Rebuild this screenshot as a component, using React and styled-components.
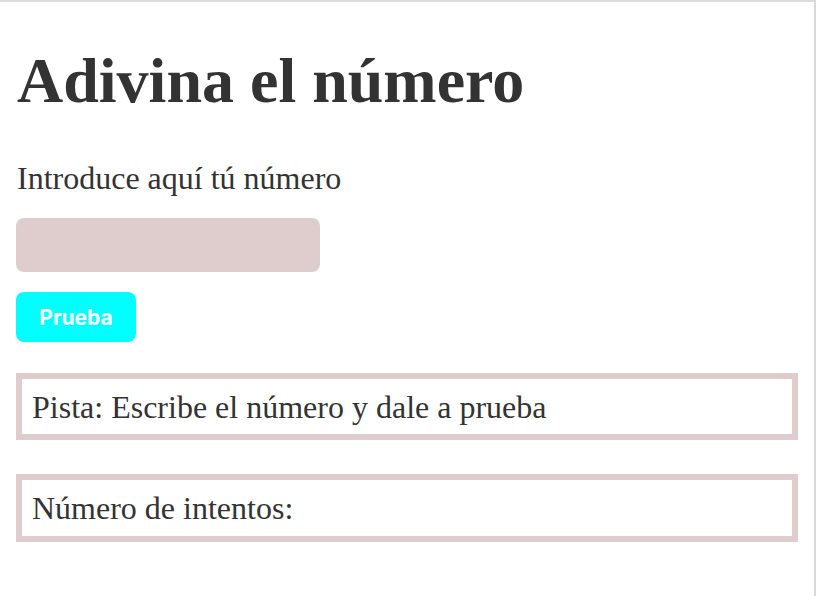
import React from 'react'
import styled, { createGlobalStyle } from 'styled-components';

const GlobalStyle = createGlobalStyle`
    html, body {
        margin:0;
        padding:0;
        background:#fff;
    }
`;

const Frame = styled.div`
    box-sizing:border-box;
    height:100vh;
    border-top:2px solid #dcdce0;
    border-right:2px solid #d9d9dd;
    padding:0 16px;
    font-family:"Liberation Serif", "Times New Roman", serif;
    color:#333;
`;

const Title = styled.h1`
    font-size:64px;
    font-weight:bold;
    margin:42px 0 42px 1px;
    line-height:74px;
`;

const Label = styled.p`
    font-size:32px;
    margin:0 0 21px 1px;
    line-height:37px;
`;

const Input = styled.input`
    display:block;
    box-sizing:border-box;
    width:304px;
    height:54px;
    border:none;
    border-radius:8px;
    background:#dfcccc;
    margin:0 0 20px;
    outline:none;
    font-size:24px;
`;

const Button = styled.button`
    display:block;
    box-sizing:border-box;
    width:120px;
    height:50px;
    padding:0;
    border:none;
    border-radius:8px;
    background:#00ffff;
    color:#fff;
    font-family:Inter, "Liberation Sans", sans-serif;
    font-weight:700;
    font-size:21px;
    cursor:pointer;
`;

const Panels = styled.div`
    display:flex;
    flex-direction:column;
    gap:34px;
    margin-top:31px;
`;

const Panel = styled.div`
    box-sizing:border-box;
    height:${(props)=>props.h}px;
    border:6px solid #dfcccc;
    padding:10px 10px 0;
    font-size:32px;
    line-height:37px;
`;

const App = () => {
  return (
    <Frame>
      <GlobalStyle />
      <Title>Adivina el número</Title>
      <Label>Introduce aquí tú número</Label>
      <Input type="text" />
      <Button>Prueba</Button>
      <Panels>
        <Panel h={67}>Pista: Escribe el número y dale a prueba</Panel>
        <Panel h={68}>Número de intentos:</Panel>
      </Panels>
    </Frame>
  )
}

export default App;
